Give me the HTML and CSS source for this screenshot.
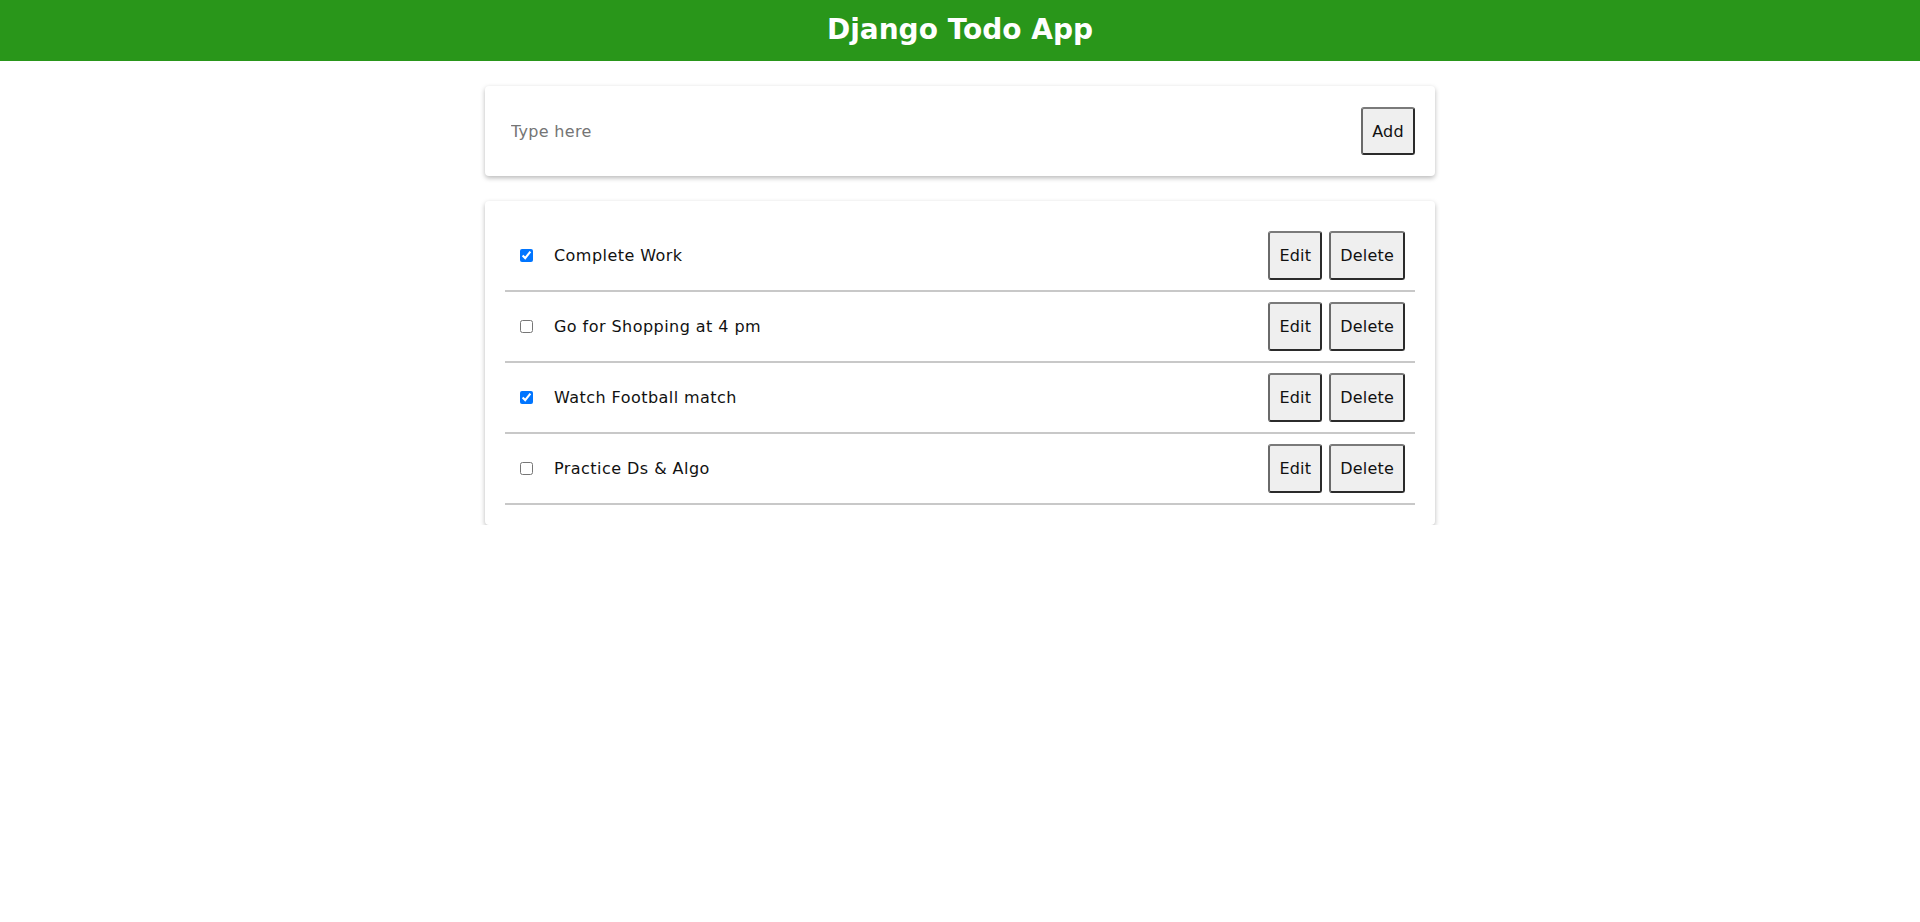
FILE: index.html
```html
<!DOCTYPE html>
<html lang="en">
<head>
<meta charset="utf-8">
<title>Django Todo App</title>
<link rel="stylesheet" href="styles.css">
</head>
<body>
<header class="topbar">
  <h1 class="topbar-title">Django Todo App</h1>
</header>
<main class="container">
  <form class="card add-form">
    <input class="add-input" type="text" placeholder="Type here">
    <button class="btn btn-add" type="button">Add</button>
  </form>
  <section class="card list-card">
    <ul class="todo-list">
      <li class="todo-row">
        <input class="todo-check" type="checkbox" checked>
        <span class="todo-text">Complete Work</span>
        <div class="todo-actions">
          <button class="btn" type="button">Edit</button>
          <button class="btn" type="button">Delete</button>
        </div>
      </li>
      <li class="todo-row">
        <input class="todo-check" type="checkbox">
        <span class="todo-text">Go for Shopping at 4 pm</span>
        <div class="todo-actions">
          <button class="btn" type="button">Edit</button>
          <button class="btn" type="button">Delete</button>
        </div>
      </li>
      <li class="todo-row">
        <input class="todo-check" type="checkbox" checked>
        <span class="todo-text">Watch Football match</span>
        <div class="todo-actions">
          <button class="btn" type="button">Edit</button>
          <button class="btn" type="button">Delete</button>
        </div>
      </li>
      <li class="todo-row">
        <input class="todo-check" type="checkbox">
        <span class="todo-text">Practice Ds &amp; Algo</span>
        <div class="todo-actions">
          <button class="btn" type="button">Edit</button>
          <button class="btn" type="button">Delete</button>
        </div>
      </li>
    </ul>
  </section>
</main>
</body>
</html>
```
FILE: styles.css
```css
* {
  box-sizing: border-box;
}

body {
  margin: 0;
  background: #ffffff;
  font-family: "DejaVu Sans", "Noto Sans", sans-serif;
  font-size: 16px;
  color: #111111;
}

.topbar {
  height: 61px;
  background: #29961a;
  display: flex;
  align-items: center;
  justify-content: center;
}

.topbar-title {
  margin: 0;
  color: #ffffff;
  font-size: 28px;
  font-weight: 700;
  line-height: 1;
  padding-bottom: 2px;
}

.container {
  width: 950px;
  margin: 25px auto 0;
  display: flex;
  flex-direction: column;
  gap: 25px;
}

.card {
  background: #ffffff;
  border-radius: 4px;
  box-shadow: 0 2px 5px rgba(0, 0, 0, 0.28);
  padding: 20px;
}

.add-form {
  display: flex;
  align-items: center;
  margin: 0;
  padding: 21px 20px;
}

.add-input {
  flex: 1;
  border: none;
  outline: none;
  padding: 0 6px;
  height: 48px;
  font-family: inherit;
  font-size: 16px;
  letter-spacing: 0.3px;
  color: #111111;
  background: transparent;
}

.add-input::placeholder {
  color: #757575;
}

.btn {
  height: 49px;
  padding: 0 9px;
  font-family: inherit;
  font-size: 16px;
  letter-spacing: 0.2px;
  color: #111111;
  background: #efefef;
  border: 2px solid;
  border-color: #7a7a7a #2b2b2b #2b2b2b #6a6a6a;
  border-radius: 3px;
  cursor: pointer;
}

.btn-add {
  height: 48px;
  width: 54px;
  padding: 0;
}

.todo-list {
  list-style: none;
  margin: 0;
  padding: 0;
}

.todo-row {
  display: flex;
  align-items: center;
  padding: 10px 10px 10px 11px;
  border-bottom: 2px solid #c8c8c8;
}

.todo-check {
  margin: 3px 3px 3px 4px;
  width: 13px;
  height: 13px;
}

.todo-text {
  margin-left: 18px;
  flex: 1;
  letter-spacing: 0.45px;
}

.todo-actions {
  display: flex;
  gap: 7px;
}
```
